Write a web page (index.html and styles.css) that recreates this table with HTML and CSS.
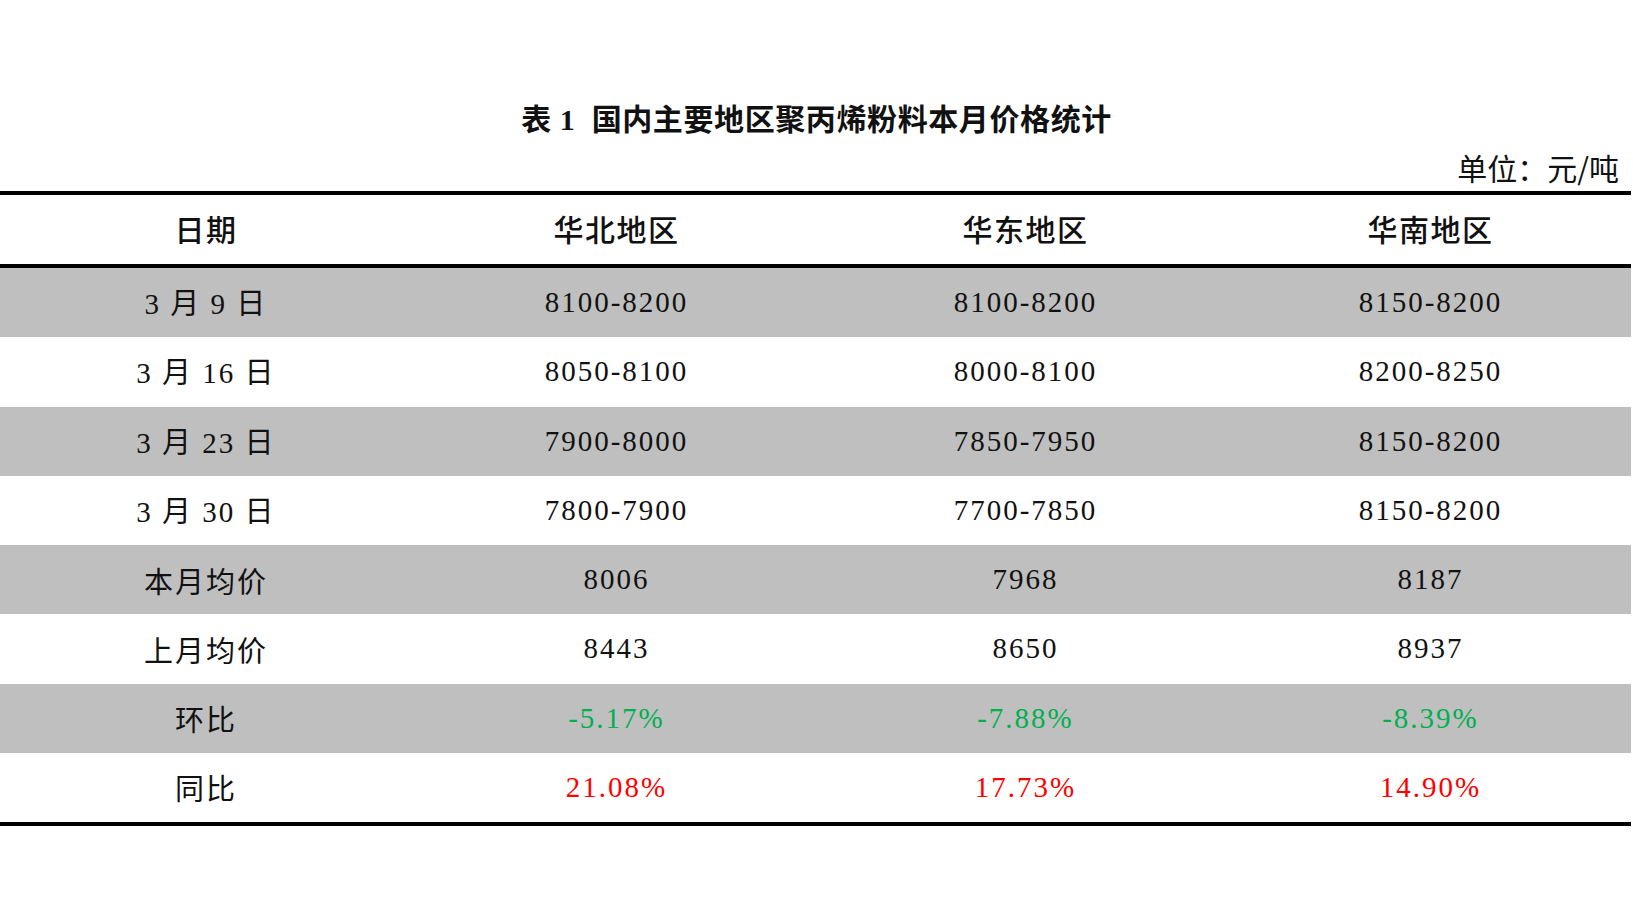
FILE: index.html
```html
<!DOCTYPE html>
<html lang="zh-CN">
<head>
<meta charset="utf-8">
<title>表1 国内主要地区聚丙烯粉料本月价格统计</title>
<link rel="stylesheet" href="styles.css">
</head>
<body>
<div class="page">
  <h1 class="title">表 1 &nbsp;国内主要地区聚丙烯粉料本月价格统计</h1>
  <div class="unit">单位：元/吨</div>
  <div class="table">
    <div class="row head">
      <div class="cell">日期</div>
      <div class="cell">华北地区</div>
      <div class="cell">华东地区</div>
      <div class="cell">华南地区</div>
    </div>
    <div class="row shade">
      <div class="cell date">3 月 9 日</div>
      <div class="cell">8100-8200</div>
      <div class="cell">8100-8200</div>
      <div class="cell">8150-8200</div>
    </div>
    <div class="row">
      <div class="cell date">3 月 16 日</div>
      <div class="cell">8050-8100</div>
      <div class="cell">8000-8100</div>
      <div class="cell">8200-8250</div>
    </div>
    <div class="row shade">
      <div class="cell date">3 月 23 日</div>
      <div class="cell">7900-8000</div>
      <div class="cell">7850-7950</div>
      <div class="cell">8150-8200</div>
    </div>
    <div class="row">
      <div class="cell date">3 月 30 日</div>
      <div class="cell">7800-7900</div>
      <div class="cell">7700-7850</div>
      <div class="cell">8150-8200</div>
    </div>
    <div class="row shade">
      <div class="cell">本月均价</div>
      <div class="cell">8006</div>
      <div class="cell">7968</div>
      <div class="cell">8187</div>
    </div>
    <div class="row">
      <div class="cell">上月均价</div>
      <div class="cell">8443</div>
      <div class="cell">8650</div>
      <div class="cell">8937</div>
    </div>
    <div class="row shade">
      <div class="cell">环比</div>
      <div class="cell down">-5.17%</div>
      <div class="cell down">-7.88%</div>
      <div class="cell down">-8.39%</div>
    </div>
    <div class="row">
      <div class="cell">同比</div>
      <div class="cell up">21.08%</div>
      <div class="cell up">17.73%</div>
      <div class="cell up">14.90%</div>
    </div>
  </div>
</div>
</body>
</html>
```

FILE: styles.css
```css
html, body {
  margin: 0;
  padding: 0;
  background: #ffffff;
}

.page {
  width: 1633px;
  padding-top: 100px;
  font-family: "Liberation Serif", "Noto Sans CJK SC", serif;
  color: #111111;
}

.title {
  margin: 0;
  height: 40px;
  line-height: 40px;
  text-align: center;
  font-size: 30px;
  font-weight: 700;
  letter-spacing: 0.6px;
  color: #111111;
}

.unit {
  margin-top: 9px;
  height: 36px;
  line-height: 36px;
  text-align: right;
  padding-right: 14px;
  font-size: 30px;
  font-family: "Noto Sans CJK SC", sans-serif;
}

.table {
  margin-top: 6px;
  width: 1631px;
  border-top: 4px solid #000000;
  border-bottom: 4px solid #000000;
}

.row {
  display: grid;
  grid-template-columns: 412px 409px 409px 1fr;
  align-items: center;
  height: 69.25px;
  font-size: 29px;
  letter-spacing: 2px;
}

.row.head {
  height: 73px;
  padding-bottom: 3px;
  box-sizing: border-box;
  border-bottom: 4px solid #000000;
  font-family: "Noto Sans CJK SC", sans-serif;
  font-weight: 500;
  font-size: 30px;
  letter-spacing: 1.5px;
}

.row.shade {
  background: #bfbfbf;
}

.cell {
  text-align: center;
  white-space: nowrap;
}

.cell.date {
  padding-bottom: 3px;
}

.cell.down {
  color: #00b050;
}

.cell.up {
  color: #ff0000;
}
```
